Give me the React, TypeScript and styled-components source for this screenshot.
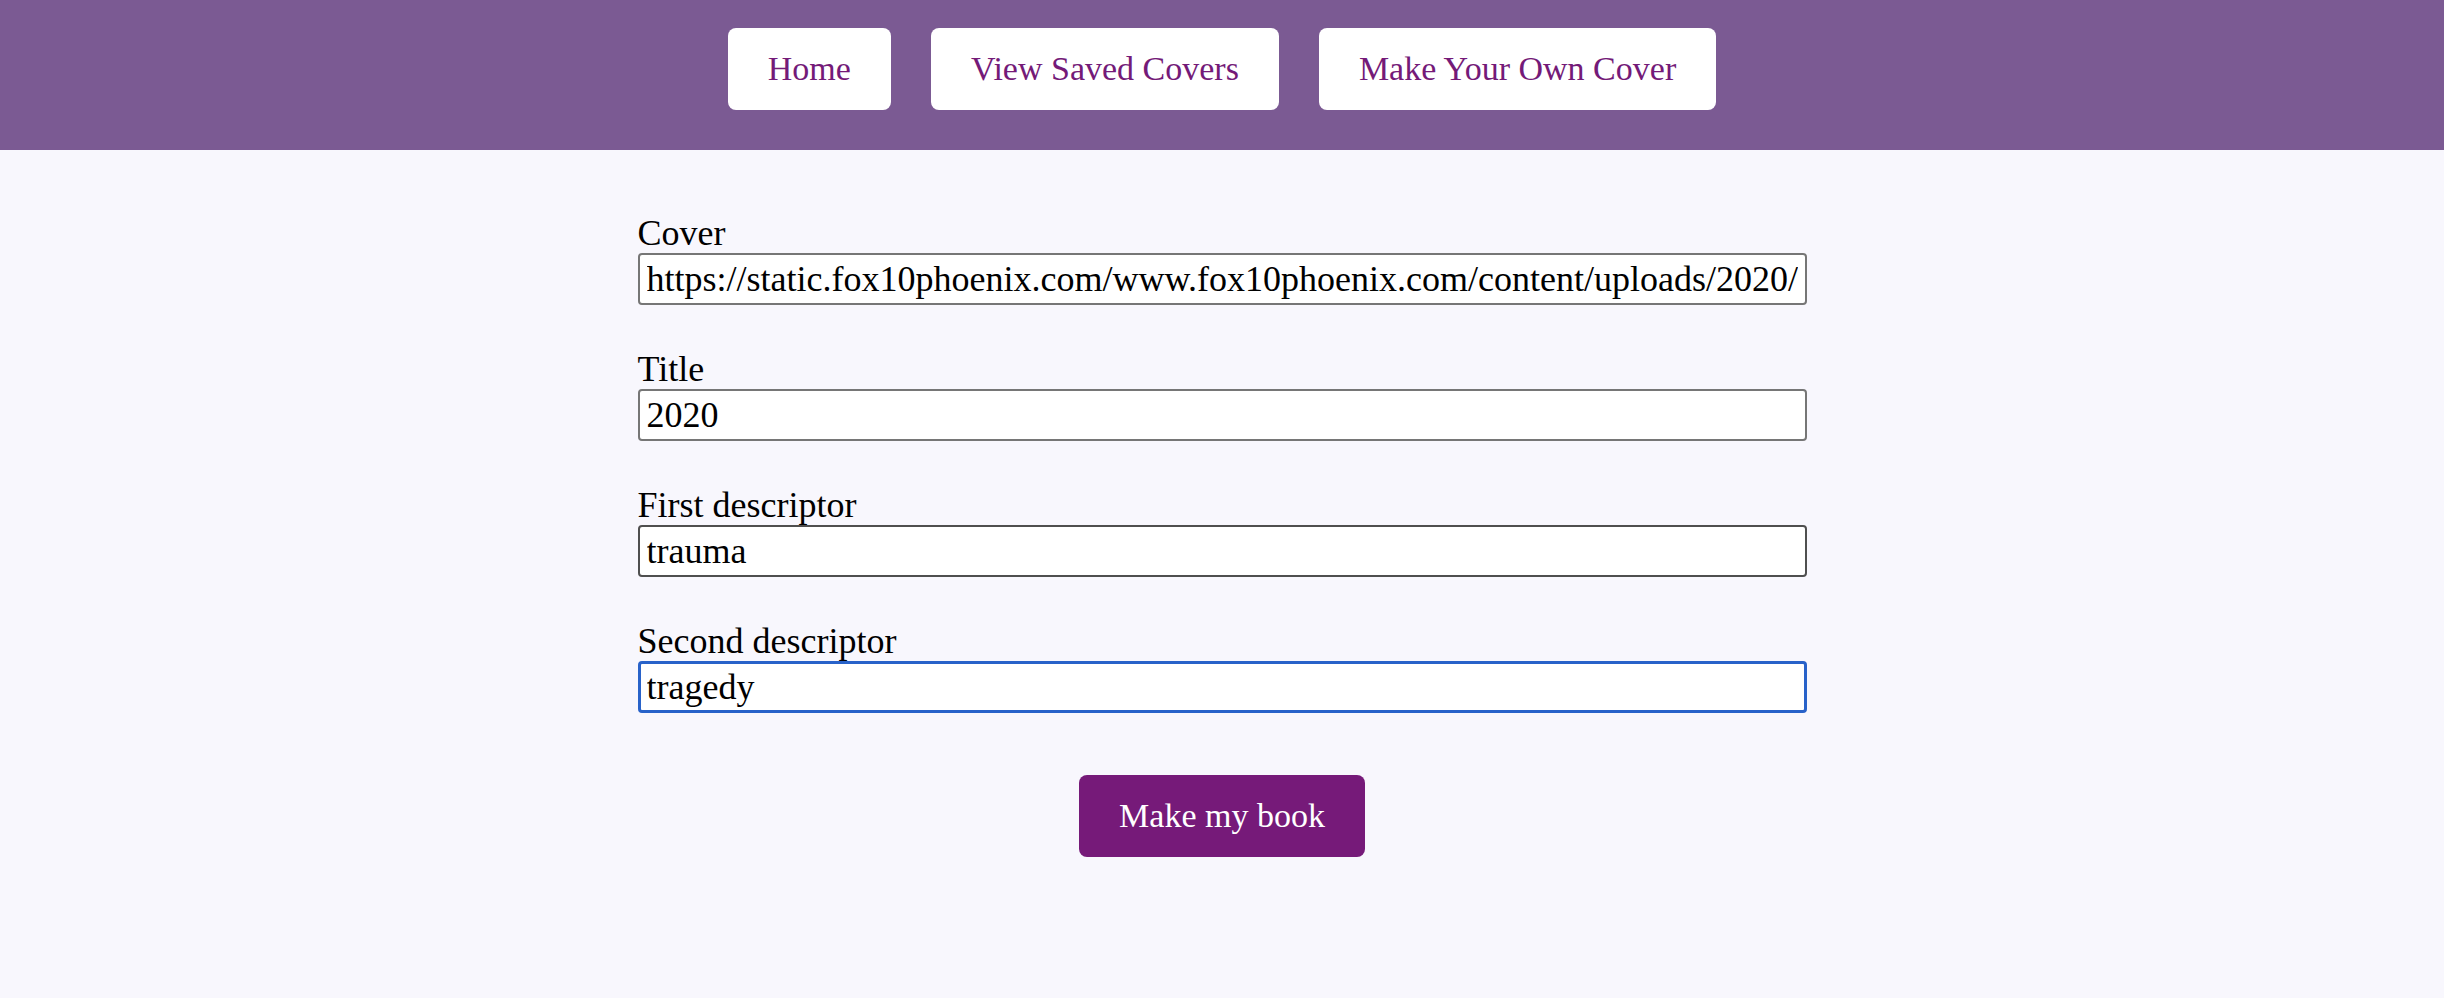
import React from "react";
import styled, { createGlobalStyle } from "styled-components";

const GlobalStyle = createGlobalStyle`
  html, body {
    margin: 0;
    padding: 0;
    background: #f8f7fd;
    font-family: "Liberation Serif", "Times New Roman", serif;
  }
  * { box-sizing: border-box; }
`;

const Page = styled.div`
  min-height: 998px;
  background: #f8f7fd;
`;

const Header = styled.header`
  background: #7b5a93;
  padding: 28px 0 40px;
  display: flex;
  justify-content: center;
  gap: 40px;
`;

const NavButton = styled.button`
  font-family: "Liberation Serif", "Times New Roman", serif;
  font-size: 34px;
  line-height: 40px;
  color: #741a78;
  background: #ffffff;
  border: none;
  border-radius: 8px;
  padding: 21px 40px;
  cursor: pointer;
`;

const Form = styled.form`
  width: 1169px;
  margin: 0 auto;
  padding-top: 64px;
  display: flex;
  flex-direction: column;
  gap: 45px;
`;

const Field = styled.div`
  display: flex;
  flex-direction: column;
`;

const Label = styled.label`
  font-size: 36px;
  line-height: 39px;
  color: #000;
`;

const Input = styled.input<{ $state?: "focus" | "hover" }>`
  width: 100%;
  height: 52px;
  font-family: "Liberation Serif", "Times New Roman", serif;
  font-size: 36px;
  color: #000;
  background: #fff;
  border-radius: 4px;
  border: ${(p) =>
    p.$state === "focus"
      ? "3px solid #2862c9"
      : p.$state === "hover"
      ? "2px solid #4f4f4f"
      : "2px solid #767676"};
  padding: 0 ${(p) => (p.$state === "focus" ? "6px" : "7px")};
  outline: none;
`;

const SubmitRow = styled.div`
  display: flex;
  justify-content: center;
  padding-top: 17px;
`;

const SubmitButton = styled.button`
  font-family: "Liberation Serif", "Times New Roman", serif;
  font-size: 34px;
  line-height: 40px;
  color: #ffffff;
  background: #761a79;
  border: none;
  border-radius: 8px;
  padding: 21px 40px;
  cursor: pointer;
`;

const fields: { id: string; label: string; value: string; state?: "focus" | "hover" }[] = [
  {
    id: "cover",
    label: "Cover",
    value:
      "https://static.fox10phoenix.com/www.fox10phoenix.com/content/uploads/2020/03/764/432/coronavirus.jpg",
  },
  { id: "title", label: "Title", value: "2020" },
  { id: "first", label: "First descriptor", value: "trauma", state: "hover" },
  { id: "second", label: "Second descriptor", value: "tragedy", state: "focus" },
];

export default function App() {
  return (
    <Page>
      <GlobalStyle />
      <Header>
        <NavButton type="button">Home</NavButton>
        <NavButton type="button">View Saved Covers</NavButton>
        <NavButton type="button">Make Your Own Cover</NavButton>
      </Header>
      <Form onSubmit={(e) => e.preventDefault()}>
        {fields.map((f) => (
          <Field key={f.id}>
            <Label htmlFor={f.id}>{f.label}</Label>
            <Input id={f.id} type="text" defaultValue={f.value} $state={f.state} />
          </Field>
        ))}
        <SubmitRow>
          <SubmitButton type="submit">Make my book</SubmitButton>
        </SubmitRow>
      </Form>
    </Page>
  );
}
